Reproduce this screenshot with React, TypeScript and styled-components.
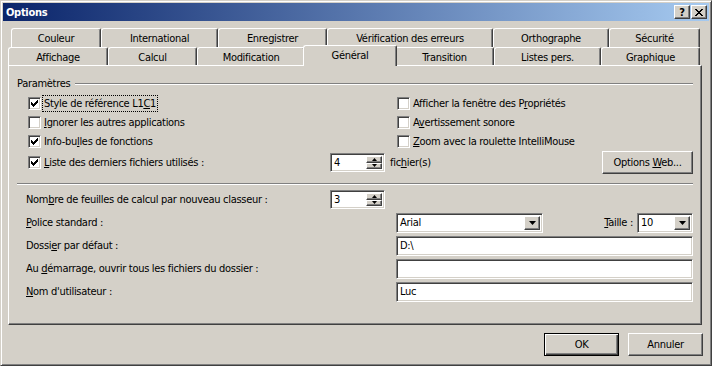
import React from "react";
import styled, { createGlobalStyle, css } from "styled-components";

const face = "#d4d0c8";
const shadow = "#808080";
const dark = "#404040";

const Global = createGlobalStyle`
  html, body { margin: 0; padding: 0; background: ${face}; }
  body {
    font-family: "DejaVu Sans Condensed", "DejaVu Sans", sans-serif;
    font-stretch: condensed;
    font-size: 11px;
    letter-spacing: -0.3px;
    color: #000;
  }
  * { box-sizing: border-box; }
`;

const raised = css`
  border: 1px solid;
  border-color: #fff ${dark} ${dark} #fff;
  box-shadow: inset -1px -1px ${shadow}, inset 1px 1px ${face};
  background: ${face};
`;

const sunken = css`
  border: 1px solid;
  border-color: ${shadow} #fff #fff ${shadow};
  box-shadow: inset 1px 1px ${dark}, inset -1px -1px ${face};
  background: #fff;
`;

const Window = styled.div`
  width: 712px;
  height: 366px;
  background: ${face};
  border: 1px solid;
  border-color: ${face} ${dark} ${dark} ${face};
  box-shadow: inset 1px 1px #fff, inset -1px -1px ${shadow};
  padding: 2px;
  display: flex;
  flex-direction: column;
`;

const TitleBar = styled.div`
  height: 18px;
  flex: none;
  display: flex;
  align-items: center;
  padding: 0 2px 0 3px;
  background: linear-gradient(to right, #0a246a, #a6caf0);
`;

const Title = styled.span`
  color: #fff;
  font-weight: bold;
  font-size: 11px;
`;

const TitleButtons = styled.div`
  margin-left: auto;
  display: flex;
  gap: 1px;
`;

const TitleButton = styled.div`
  ${raised};
  width: 16px;
  height: 14px;
  display: flex;
  align-items: center;
  justify-content: center;
  font-weight: bold;
  font-size: 11px;
  line-height: 1;
`;

const Body = styled.div`
  flex: 1;
  display: flex;
  flex-direction: column;
  padding: 7px 6px 0 5px;
`;

const TabRow = styled.div<{ $indent: number; $h: number }>`
  display: flex;
  height: ${(p) => p.$h}px;
  padding-left: ${(p) => p.$indent}px;
  flex: none;
`;

const Tab = styled.div<{ $w: number; $active?: boolean }>`
  flex: none;
  width: ${(p) => p.$w}px;
  height: 100%;
  background: ${face};
  border-top: 1px solid #fff;
  border-left: 1px solid #fff;
  border-right: 1px solid ${dark};
  border-radius: 3px 2px 0 0;
  box-shadow: inset -1px 0 ${shadow};
  display: flex;
  align-items: center;
  justify-content: center;
  padding-top: 1px;
  white-space: nowrap;
  ${(p) =>
    p.$active &&
    css`
      width: ${p.$w + 4}px;
      margin: -2px -2px 0;
      height: 21px;
      padding-top: 0;
      padding-bottom: 2px;
      position: relative;
      z-index: 1;
    `}
`;

const Panel = styled.div`
  height: 260px;
  flex: none;
  margin-right: 1px;
  border: 1px solid;
  border-color: #fff ${dark} ${dark} #fff;
  box-shadow: inset -1px -1px ${shadow};
  padding: 11px 8px 0 8px;
  display: flex;
  flex-direction: column;
`;

const GroupHeader = styled.div`
  display: flex;
  align-items: center;
  height: 13px;
`;

const Groove = styled.div<{ $inset?: number }>`
  flex: 1;
  height: 2px;
  margin-left: ${(p) => p.$inset ?? 0}px;
  border-top: 1px solid ${shadow};
  border-bottom: 1px solid #fff;
`;

const Separator = styled.div`
  height: 2px;
  margin-top: 9px;
  border-top: 1px solid ${shadow};
  border-bottom: 1px solid #fff;
`;

const SettingsGrid = styled.div`
  margin-top: 4px;
  padding-left: 11px;
  display: grid;
  grid-template-columns: 302px 67px 1fr;
  grid-template-rows: 19px 19px 19px 23px;
`;

const CheckItem = styled.label<{ $col?: number }>`
  display: flex;
  align-items: center;
  gap: 3px;
  grid-column: ${(p) => p.$col ?? 1};
  white-space: nowrap;
`;

const Box = styled.span`
  ${sunken};
  width: 13px;
  height: 13px;
  flex: none;
  display: flex;
  align-items: center;
  justify-content: center;
`;

const Label = styled.span<{ $focus?: boolean }>`
  ${(p) =>
    p.$focus &&
    css`
      outline: 1px dotted #000;
      outline-offset: 1px;
    `}
`;

const K = styled.span`
  text-decoration: underline;
`;

const FilesCell = styled.div`
  grid-column: 2 / 4;
  display: flex;
  align-items: center;
`;

const FilesLabel = styled.span`
  margin-left: 5px;
`;

const Button = styled.div<{ $w: number; $default?: boolean }>`
  width: ${(p) => p.$w}px;
  height: 23px;
  flex: none;
  display: flex;
  align-items: center;
  justify-content: center;
  background: ${face};
  white-space: pre;
  ${(p) =>
    p.$default
      ? css`
          border: 1px solid #000;
          box-shadow: inset 1px 1px #fff, inset -1px -1px ${dark}, inset -2px -2px ${shadow};
        `
      : css`
          border: 1px solid;
          border-color: #fff ${dark} ${dark} #fff;
          box-shadow: inset -1px -1px ${shadow}, inset 1px 1px ${face};
        `}
`;

const PushRight = styled.div`
  margin-left: auto;
`;

const LowerGrid = styled.div`
  margin-top: 3px;
  padding-left: 9px;
  display: grid;
  grid-template-columns: 304px 66px 1fr;
  grid-auto-rows: 23px;
  align-items: center;
`;

const FieldLabel = styled.div`
  grid-column: 1 / 3;
  white-space: nowrap;
`;

const FirstLabel = styled.div`
  grid-column: 1;
  white-space: nowrap;
`;

const Spinner = styled.div<{ $w: number }>`
  ${sunken};
  width: ${(p) => p.$w}px;
  height: 19px;
  display: flex;
  align-items: stretch;
  padding: 2px;
`;

const SpinValue = styled.span`
  flex: 1;
  display: flex;
  align-items: center;
  padding-left: 1px;
`;

const SpinButtons = styled.div`
  width: 16px;
  display: flex;
  flex-direction: column;
`;

const SpinBtn = styled.div`
  ${raised};
  flex: 1;
  display: flex;
  align-items: center;
  justify-content: center;
`;

const ControlCell = styled.div`
  grid-column: 3;
  display: flex;
  align-items: center;
`;

const Combo = styled.div<{ $w: number }>`
  ${sunken};
  width: ${(p) => p.$w}px;
  height: 20px;
  display: flex;
  align-items: stretch;
  padding: 2px;
  flex: none;
`;

const ComboText = styled.span`
  flex: 1;
  display: flex;
  align-items: center;
  padding-left: 1px;
`;

const DropBtn = styled.div`
  ${raised};
  width: 16px;
  display: flex;
  align-items: center;
  justify-content: center;
`;

const SizeLabel = styled.span`
  margin-left: auto;
  margin-right: 4px;
`;

const TextField = styled.div`
  ${sunken};
  width: 100%;
  height: 20px;
  display: flex;
  align-items: center;
  padding-left: 3px;
`;

const Footer = styled.div`
  display: flex;
  justify-content: flex-end;
  gap: 9px;
  padding-top: 8px;
`;

const CheckMark = () => (
  <svg width="7" height="7" viewBox="0 0 7 7" shapeRendering="crispEdges">
    {[2, 3, 4, 3, 2, 1, 0].map((y, x) => (
      <rect key={x} x={x} y={y} width="1" height="3" fill="#000" />
    ))}
  </svg>
);

const Check = ({ checked }: { checked?: boolean }) => (
  <Box>{checked && <CheckMark />}</Box>
);

const Arrow = ({ dir, size }: { dir: "up" | "down"; size: number }) => {
  const w = size * 2 - 1;
  const pts =
    dir === "down"
      ? `0,0 ${w},0 ${w / 2},${size}`
      : `0,${size} ${w},${size} ${w / 2},0`;
  return (
    <svg width={w} height={size} viewBox={`0 0 ${w} ${size}`}>
      <polygon points={pts} fill="#000" />
    </svg>
  );
};

const SpinBox = ({ value, w }: { value: string; w: number }) => (
  <Spinner $w={w}>
    <SpinValue>{value}</SpinValue>
    <SpinButtons>
      <SpinBtn>
        <Arrow dir="up" size={3} />
      </SpinBtn>
      <SpinBtn>
        <Arrow dir="down" size={3} />
      </SpinBtn>
    </SpinButtons>
  </Spinner>
);

const ComboBox = ({ value, w }: { value: string; w: number }) => (
  <Combo $w={w}>
    <ComboText>{value}</ComboText>
    <DropBtn>
      <Arrow dir="down" size={4} />
    </DropBtn>
  </Combo>
);

const CloseGlyph = () => (
  <svg width="8" height="7" viewBox="0 0 8 7" shapeRendering="crispEdges">
    {[0, 1, 2, 3, 4, 5, 6].map((i) => (
      <React.Fragment key={i}>
        <rect x={i} y={i} width="2" height="1" fill="#000" />
        <rect x={6 - i} y={i} width="2" height="1" fill="#000" />
      </React.Fragment>
    ))}
  </svg>
);

const backTabs: [string, number][] = [
  ["Couleur", 90],
  ["International", 117],
  ["Enregistrer", 109],
  ["Vérification des erreurs", 166],
  ["Orthographe", 116],
  ["Sécurité", 91],
];

const frontTabs: [string, number][] = [
  ["Affichage", 100],
  ["Calcul", 89],
  ["Modification", 108],
  ["Général", 90],
  ["Transition", 99],
  ["Listes pers.", 107],
  ["Graphique", 99],
];

export default function App() {
  return (
    <>
      <Global />
      <Window>
        <TitleBar>
          <Title>Options</Title>
          <TitleButtons>
            <TitleButton>?</TitleButton>
            <TitleButton>
              <CloseGlyph />
            </TitleButton>
          </TitleButtons>
        </TitleBar>
        <Body>
          <TabRow $indent={3} $h={19}>
            {backTabs.map(([t, w]) => (
              <Tab key={t} $w={w}>
                {t}
              </Tab>
            ))}
          </TabRow>
          <TabRow $indent={0} $h={18}>
            {frontTabs.map(([t, w]) => (
              <Tab key={t} $w={w} $active={t === "Général"}>
                {t}
              </Tab>
            ))}
          </TabRow>
          <Panel>
            <GroupHeader>
              <span>Paramètres</span>
              <Groove $inset={5} />
            </GroupHeader>
            <SettingsGrid>
              <CheckItem>
                <Check checked />
                <Label $focus>
                  Style de référence L1<K>C</K>1
                </Label>
              </CheckItem>
              <CheckItem $col={3}>
                <Check />
                <Label>
                  Afficher la fenêtre des P<K>r</K>opriétés
                </Label>
              </CheckItem>
              <CheckItem>
                <Check />
                <Label>
                  <K>I</K>gnorer les autres applications
                </Label>
              </CheckItem>
              <CheckItem $col={3}>
                <Check />
                <Label>
                  A<K>v</K>ertissement sonore
                </Label>
              </CheckItem>
              <CheckItem>
                <Check checked />
                <Label>
                  Info-bu<K>l</K>les de fonctions
                </Label>
              </CheckItem>
              <CheckItem $col={3}>
                <Check />
                <Label>
                  <K>Z</K>oom avec la roulette IntelliMouse
                </Label>
              </CheckItem>
              <CheckItem>
                <Check checked />
                <Label>
                  <K>L</K>iste des derniers fichiers utilisés :
                </Label>
              </CheckItem>
              <FilesCell>
                <SpinBox value="4" w={55} />
                <FilesLabel>
                  fic<K>h</K>ier(s)
                </FilesLabel>
                <PushRight>
                  <Button $w={91}>
                    <span>
                      Options <K>W</K>eb...
                    </span>
                  </Button>
                </PushRight>
              </FilesCell>
            </SettingsGrid>
            <Separator />
            <LowerGrid>
              <FirstLabel>
                Nom<K>b</K>re de feuilles de calcul par nouveau classeur :
              </FirstLabel>
              <div>
                <SpinBox value="3" w={55} />
              </div>
              <FieldLabel>
                <K>P</K>olice standard :
              </FieldLabel>
              <ControlCell>
                <ComboBox value="Arial" w={147} />
                <SizeLabel>
                  <K>T</K>aille :
                </SizeLabel>
                <ComboBox value="10" w={56} />
              </ControlCell>
              <FieldLabel>
                Dossi<K>e</K>r par défaut :
              </FieldLabel>
              <ControlCell>
                <TextField>D:\</TextField>
              </ControlCell>
              <FieldLabel>
                Au <K>d</K>émarrage, ouvrir tous les fichiers du dossier :
              </FieldLabel>
              <ControlCell>
                <TextField />
              </ControlCell>
              <FieldLabel>
                <K>N</K>om d'utilisateur :
              </FieldLabel>
              <ControlCell>
                <TextField>Luc</TextField>
              </ControlCell>
            </LowerGrid>
          </Panel>
          <Footer>
            <Button $w={75} $default>
              OK
            </Button>
            <Button $w={75}>Annuler</Button>
          </Footer>
        </Body>
      </Window>
    </>
  );
}
